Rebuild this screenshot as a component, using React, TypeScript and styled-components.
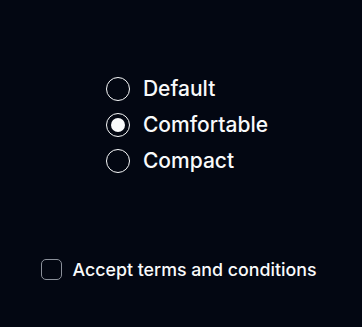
import React, { useState } from 'react'
import styled, { createGlobalStyle } from 'styled-components'

const GlobalStyle = createGlobalStyle`
  html, body {
    margin: 0;
    padding: 0;
    background: #030712;
  }
  * {
    box-sizing: border-box;
  }
`

const Page = styled.div`
  width: 362px;
  height: 327px;
  background: #030712;
  color: #f9fafb;
  font-family: Inter, "Noto Sans", sans-serif;
  display: flex;
  flex-direction: column;
  align-items: center;
  padding-top: 77px;
`

const RadioGroup = styled.div`
  display: flex;
  flex-direction: column;
  gap: 12px;
  margin-left: 12px;
`

const Item = styled.label`
  display: flex;
  align-items: center;
  gap: 13px;
  cursor: pointer;
`

const Circle = styled.span<{ $checked: boolean }>`
  width: 24px;
  height: 24px;
  border-radius: 50%;
  border: 1.5px solid #f9fafb;
  display: flex;
  align-items: center;
  justify-content: center;

  &::after {
    content: '';
    width: 14px;
    height: 14px;
    border-radius: 50%;
    background: #f9fafb;
    display: ${p => (p.$checked ? 'block' : 'none')};
  }
`

const LabelText = styled.span`
  font-size: 21px;
  font-weight: 500;
  line-height: 24px;
`

const TermsRow = styled.label`
  display: flex;
  align-items: center;
  gap: 11px;
  margin-top: 86px;
  margin-right: 5px;
  cursor: pointer;
`

const Box = styled.span`
  width: 21px;
  height: 21px;
  border-radius: 5px;
  border: 1.5px solid #8b909a;
`

const TermsText = styled.span`
  font-size: 17.8px;
  font-weight: 500;
  line-height: 21px;
`

const options = ['Default', 'Comfortable', 'Compact']

export default function App() {
  const [value, setValue] = useState('Comfortable')
  return (
    <>
      <GlobalStyle />
      <Page>
        <RadioGroup>
          {options.map(o => (
            <Item key={o} onClick={() => setValue(o)}>
              <Circle $checked={value === o} />
              <LabelText>{o}</LabelText>
            </Item>
          ))}
        </RadioGroup>
        <TermsRow>
          <Box />
          <TermsText>Accept terms and conditions</TermsText>
        </TermsRow>
      </Page>
    </>
  )
}
